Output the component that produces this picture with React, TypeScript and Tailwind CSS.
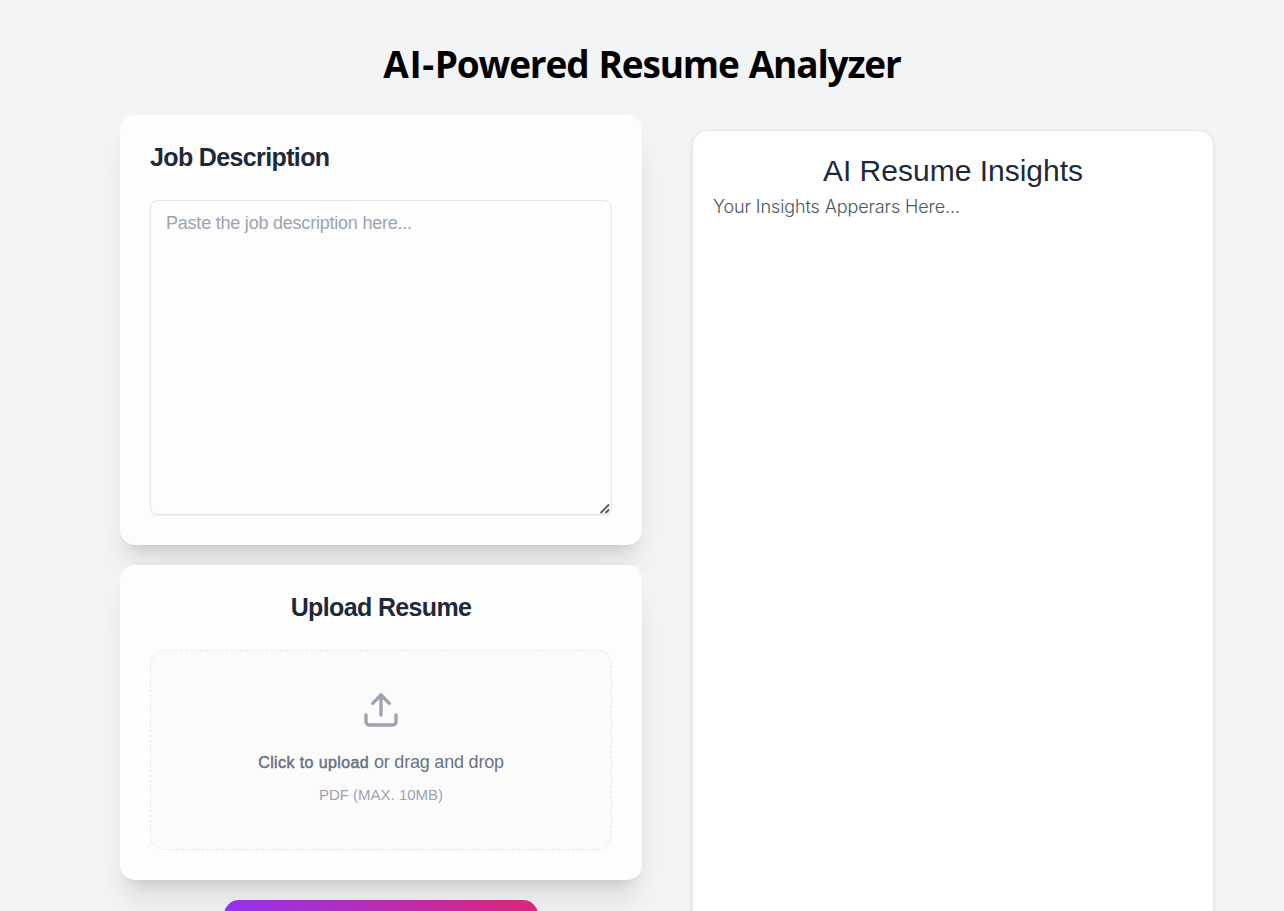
import { Upload } from "lucide-react";

const cardClass =
  "rounded-[15px] bg-[#fdfdfe] p-[30px] shadow-[0_25px_31px_-6px_rgba(0,0,0,0.1),0_10px_12px_-7px_rgba(0,0,0,0.1)]";

function ResizeGrip() {
  return (
    <svg
      className="pointer-events-none absolute right-[1px] bottom-[1px]"
      width="11"
      height="11"
      viewBox="0 0 11 11"
      fill="none"
      stroke="#555559"
      strokeWidth="1.8"
      aria-hidden="true"
    >
      <path d="M0.500 10 9 1.500M5.500 10l3.500-3.500" />
    </svg>
  );
}

function JobDescriptionCard() {
  return (
    <section className={`${cardClass} h-[430px]`}>
      <h2 className="h-[25px] text-[25px] leading-[25px] font-bold tracking-[-0.63px] text-gray-800">
        Job Description
      </h2>
      <div className="relative mt-[30px]">
        <textarea
          className="block h-[315px] w-full resize-none rounded-[8px] border border-[#e5e7eb] bg-transparent px-[15px] py-[10px] text-[18px] leading-[25px] tracking-[-0.22px] text-gray-800 shadow-[0_1px_2px_rgba(0,0,0,0.05)] outline-none placeholder:text-[#9ca3af]"
          placeholder="Paste the job description here..."
        />
        <ResizeGrip />
      </div>
    </section>
  );
}

function UploadCard() {
  return (
    <section className={`${cardClass} relative mt-5 h-[315px]`}>
      <h2 className="h-[25px] text-center text-[25px] leading-[25px] font-bold tracking-[-0.63px] text-gray-800">
        Upload Resume
      </h2>
      <label className="mt-[30px] flex h-[200px] cursor-pointer flex-col items-center rounded-[15px] border border-dashed border-[#e5e7eb] bg-[#fbfbfc] pt-[39px]">
        <Upload className="size-[40px] text-[#9ca3af]" strokeWidth={2} />
        <p className="mt-[20px] text-[18px] leading-[25px] tracking-[-0.2px] text-[#6b7280]">
          <span className="text-[16px] tracking-[0.4px] [-webkit-text-stroke:0.5px_#6b7280]">Click to upload</span> or
          drag and drop
        </p>
        <p className="mt-[10px] text-[15px] leading-[20px] text-[#9ca3af]">PDF (MAX. 10MB)</p>
        <input type="file" accept=".pdf" className="hidden" />
      </label>
    </section>
  );
}

function InsightsPanel() {
  return (
    <section className="mt-[15px] h-[800px] w-[522px] rounded-[15px] border border-[#e5e7eb] bg-white px-5 pt-[20px] shadow-[0_1px_4px_rgba(0,0,0,0.06),0_1px_3px_rgba(0,0,0,0.04)]">
      <h2 className="text-center text-[30px] leading-[40px] text-gray-800">AI Resume Insights</h2>
      <p className="font-[Inter,sans-serif] text-[18px] leading-[32px] font-light tracking-[-0.11px] text-[#4b5563]">
        Your Insights Apperars Here...
      </p>
    </section>
  );
}

export default function App() {
  return (
    <main className="h-[911px] overflow-hidden bg-[#f3f4f6] pt-[39px] pl-[120px] font-['Liberation_Sans',Arial,sans-serif]">
      <h1 className="-ml-[120px] text-center font-['Open_Sans',sans-serif] text-[37px] leading-[50px] font-bold tracking-[-1.15px] text-black [word-spacing:1.5px]">
        <span className="tracking-[0.6px]">AI-</span>Powered Resume Analyzer
      </h1>
      <div className="mt-[26px] flex items-start gap-[50px]">
        <div className="w-[522px]">
          <JobDescriptionCard />
          <UploadCard />
          <button
            type="button"
            aria-label="Analyze"
            className="relative mx-auto mt-5 block h-[55px] w-[314px] rounded-[15px] bg-linear-to-r/srgb from-[#9333ea] to-[#db2777]"
          />
        </div>
        <InsightsPanel />
      </div>
    </main>
  );
}
